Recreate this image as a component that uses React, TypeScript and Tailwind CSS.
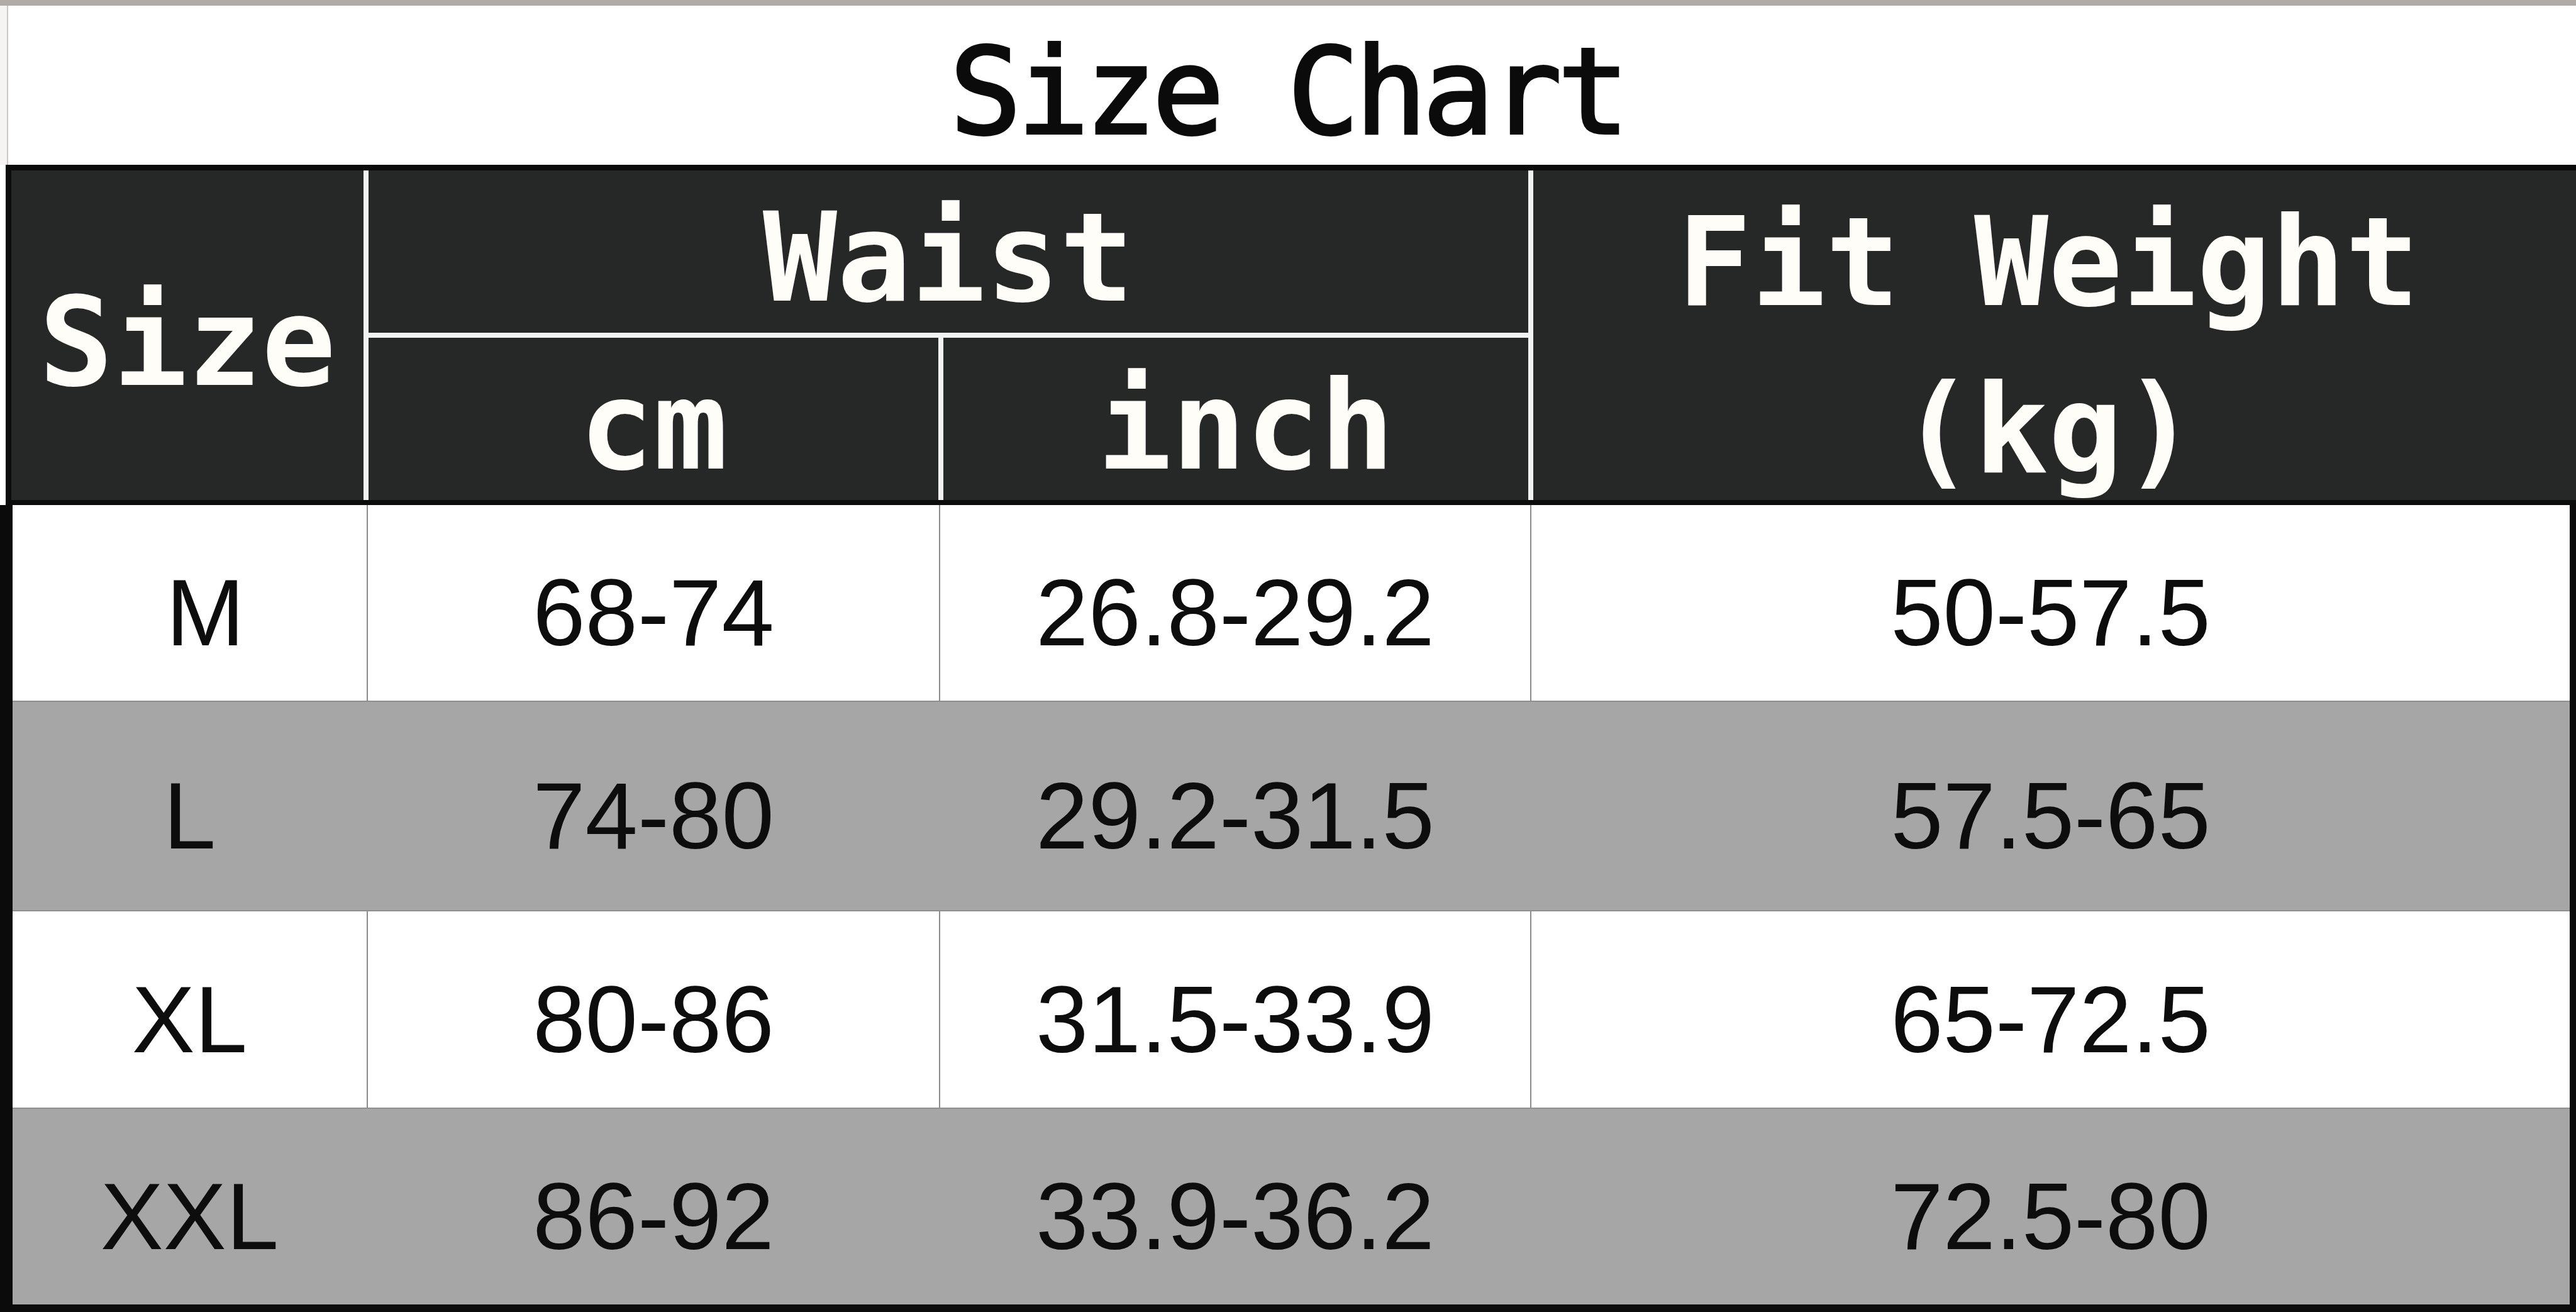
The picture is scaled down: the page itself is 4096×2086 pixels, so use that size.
const mono = { fontFamily: '"DejaVu Sans Mono", "Liberation Mono", monospace' };
const sans = { fontFamily: '"Liberation Sans", Arial, sans-serif' };

const rows = [
  { size: 'M', cm: '68-74', inch: '26.8-29.2', kg: '50-57.5', gray: false, h: 'h-[313px]', shift: 'pl-[50px]' },
  { size: 'L', cm: '74-80', inch: '29.2-31.5', kg: '57.5-65', gray: true, h: 'h-[333px]', shift: '' },
  { size: 'XL', cm: '80-86', inch: '31.5-33.9', kg: '65-72.5', gray: false, h: 'h-[314px]', shift: '' },
  { size: 'XXL', cm: '86-92', inch: '33.9-36.2', kg: '72.5-80', gray: true, h: 'h-[311px]', shift: '' },
];

function Row({ row, last }: { row: (typeof rows)[number]; last: boolean }) {
  // gray rows hide the vertical dividers by painting them the row colour
  const bg = row.gray ? 'bg-[#a6a6a6]' : 'bg-white';
  const line = row.gray ? 'border-[#a6a6a6]' : 'border-[#8c8c8c]';
  const cell = `flex items-center justify-center pt-[32px] border-r-2 ${line}`;
  return (
    <div
      className={`grid grid-cols-[565px_910px_940px_1fr] ${row.h} ${bg} ${
        last ? '' : 'border-b-2 border-[#8f8f8f]'
      }`}
    >
      <div className={`${cell} ${row.shift}`}>{row.size}</div>
      <div className={cell}>{row.cm}</div>
      <div className={cell}>{row.inch}</div>
      <div className="flex items-center justify-center pt-[32px]">{row.kg}</div>
    </div>
  );
}

export default function App() {
  return (
    <div className="h-[2086px] w-[4096px] overflow-hidden bg-white">
      {/* top strip */}
      <div className="h-[9px] bg-[#b1aba7]" />

      {/* title */}
      <div className="flex h-[253px]">
        <div className="w-[13px] border-r-2 border-[#cdc6c0] bg-[#f6f4f2]" />
        <div
          className="flex flex-1 items-center justify-center pr-[15px] pt-[22px] text-[190px] leading-none tracking-[-7px] text-[#0b0b0b] [-webkit-text-stroke:4px_#0b0b0b]"
          style={mono}
        >
          Size Chart
        </div>
      </div>

      {/* header */}
      <div
        className="ml-[9px] flex h-[541px] border-b-[8px] border-l-[9px] border-t-[9px] border-[#0b0b0b] bg-[#262727] text-[196px] font-bold leading-none text-[#fffdf7]"
        style={mono}
      >
        <div className="flex w-[568px] items-center justify-center border-r-[8px] border-[#f2f2f2] pt-[22px]">
          Size
        </div>
        <div className="flex w-[1852px] flex-col border-r-[8px] border-[#f2f2f2]">
          <div className="flex h-[266px] items-center justify-center border-b-[8px] border-[#f2f2f2] pt-[20px]">
            Waist
          </div>
          <div className="flex flex-1">
            <div className="flex w-[914px] items-center justify-center border-r-[8px] border-[#f2f2f2] pt-[22px]">
              cm
            </div>
            <div className="flex flex-1 items-center justify-center pl-[32px] pt-[22px]">inch</div>
          </div>
        </div>
        <div className="flex flex-1 flex-col items-center justify-center pr-[20px] pt-[34px] leading-[266px]">
          <span>Fit Weight</span>
          <span>(kg)</span>
        </div>
      </div>

      {/* body */}
      <div
        className="border-b-[12px] border-l-[20px] border-r-[10px] border-[#0b0b0b] text-[150px] text-[#0d0d0d]"
        style={sans}
      >
        {rows.map((r, i) => (
          <Row key={r.size} row={r} last={i === rows.length - 1} />
        ))}
      </div>
    </div>
  );
}
